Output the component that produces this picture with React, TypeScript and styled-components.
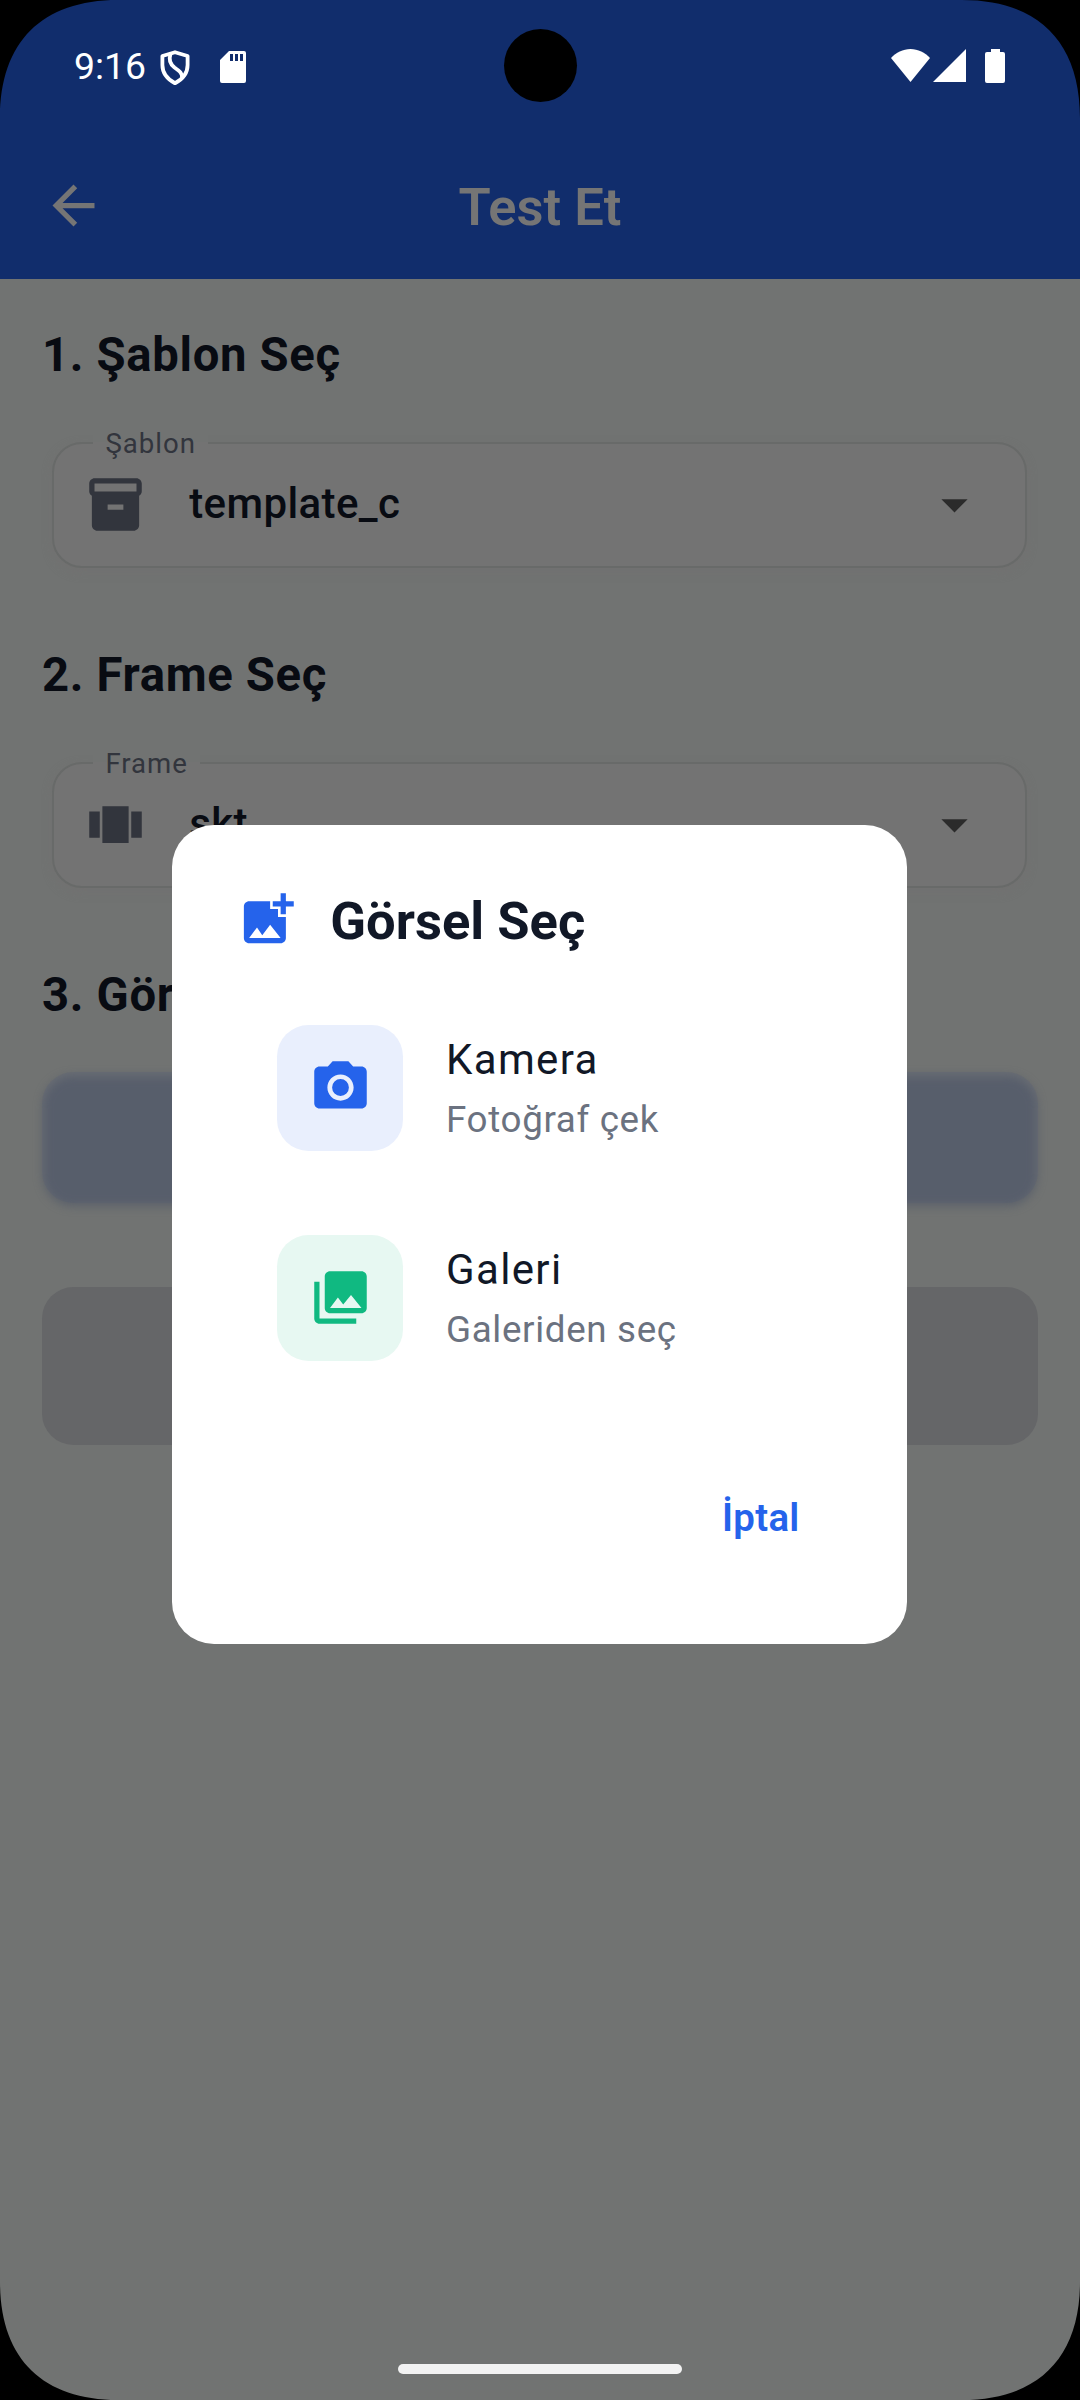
import React from "react";
import styled, { createGlobalStyle } from "styled-components";

const GlobalStyle = createGlobalStyle`
  * { box-sizing: border-box; }
  body { margin: 0; background: #000; font-family: Roboto, "Noto Sans", sans-serif; }
`;

const Screen = styled.div`
  position: relative;
  width: 1080px;
  height: 2400px;
  overflow: hidden;
  display: flex;
  flex-direction: column;
  background: #717372;
`;

const Header = styled.header`
  height: 279px;
  background: #112d6c;
  display: flex;
  flex-direction: column;
`;

const StatusBar = styled.div`
  height: 132px;
  display: flex;
  align-items: flex-start;
  justify-content: space-between;
  padding: 49px 75px 0 74px;
  color: #fff;
`;

const StatusGroup = styled.div`
  display: flex;
  align-items: flex-start;
  svg { display: block; flex: none; }
`;

const Clock = styled.span`
  width: 86px;
  font-size: 37.4px;
  line-height: 34px;
  white-space: nowrap;
`;

const Gap = styled.span<{ $w: number }>`
  width: ${(p) => p.$w}px;
`;

const AppBar = styled.div`
  height: 147px;
  display: grid;
  grid-template-columns: 147px 1fr 147px;
  align-items: center;
  justify-items: center;
  color: #757575;
  svg { display: block; }
`;

const AppTitle = styled.h1`
  margin: 0;
  padding-top: 3px;
  font-size: 52.5px;
  line-height: 62px;
  font-weight: 600;
`;

const Body = styled.main`
  display: flex;
  flex-direction: column;
  padding: 42px 42px 0;
`;

const Section = styled.section`
  display: flex;
  flex-direction: column;
  height: 320px;
`;

const SectionTitle = styled.h2`
  margin: 0;
  font-size: 47.25px;
  line-height: 68px;
  font-weight: 700;
  letter-spacing: 0.66px;
  color: #080b12;
  white-space: nowrap;
`;

const Field = styled.div`
  position: relative;
  margin: 52.5px 11px 0 10.4px;
  padding: 0 39.5px 1px 29.8px;
  height: 126px;
  display: flex;
  align-items: center;
  border: 2.6px solid #686a69;
  border-radius: 30px;
  background: #737373;
  box-shadow: 0 4px 10px rgba(114, 112, 112, 0.8);
  svg { display: block; flex: none; }
`;

const FieldLabel = styled.span`
  position: absolute;
  left: 39px;
  top: -17px;
  padding: 0 12px;
  font-size: 27.6px;
  line-height: 33px;
  letter-spacing: 1px;
  color: #32353d;
  background: linear-gradient(#717372 0 15px, #737373 15px);
`;

const FieldValue = styled.span`
  flex: 1;
  padding-left: 42px;
  font-size: 42px;
  line-height: 50px;
  letter-spacing: 0.39px;
  font-weight: 500;
  color: #080b12;
`;

const SolidButton = styled.div`
  position: relative;
  margin-top: 43px;
  height: 131px;
  border-radius: 31.5px;
  background: rgba(60, 80, 130, 0.13);
  &::before {
    content: "";
    position: absolute;
    inset: 4px 1px -3px 1px;
    border-radius: 30px;
    background: rgba(75, 83, 101, 0.6);
    filter: blur(5px);
  }
`;

const DisabledButton = styled.div`
  margin-top: 84px;
  height: 158px;
  border-radius: 31.5px;
  background: #656668;
`;

const Overlay = styled.div`
  position: absolute;
  inset: 0;
  padding: 132px 1px 63px 0;
  display: flex;
  align-items: center;
  justify-content: center;
`;

const Dialog = styled.div`
  width: 735px;
  height: 819px;
  border-radius: 42px;
  background: #fff;
  padding: 63px 63px 0;
  display: flex;
  flex-direction: column;
`;

const DialogHead = styled.div`
  display: flex;
  align-items: center;
  gap: 31.5px;
  height: 67px;
  padding-left: 0.8px;
  svg { display: block; margin-top: -4px; }
`;

const DialogTitle = styled.h2`
  margin: 0;
  padding-bottom: 2px;
  font-size: 52.5px;
  line-height: 66px;
  font-weight: 700;
  color: #111827;
`;

const Options = styled.div`
  display: flex;
  flex-direction: column;
  gap: 84px;
  padding: 70px 42px 0;
`;

const Option = styled.div`
  display: flex;
  align-items: center;
  gap: 43px;
  height: 126px;
`;

const IconTile = styled.div<{ $bg: string; $fg: string }>`
  width: 126px;
  height: 126px;
  border-radius: 31.5px;
  display: flex;
  align-items: center;
  justify-content: center;
  background: ${(p) => p.$bg};
  color: ${(p) => p.$fg};
  svg { display: block; margin-top: -1px; }
`;

const OptionText = styled.div`
  display: flex;
  flex-direction: column;
  padding-bottom: 2px;
`;

const OptionTitle = styled.span`
  font-size: 42px;
  line-height: 63px;
  letter-spacing: 1.35px;
  color: #111827;
`;

const OptionSub = styled.span`
  margin-top: 2px;
  font-size: 36.75px;
  line-height: 53px;
  letter-spacing: 0.66px;
  color: #6b7280;
`;

const Actions = styled.div`
  display: flex;
  justify-content: flex-end;
  padding: 129.5px 44.5px 0 0;
`;

const Cancel = styled.button`
  border: 0;
  background: none;
  padding: 0;
  font-family: inherit;
  font-size: 38.4px;
  line-height: 54px;
  letter-spacing: 0.26px;
  font-weight: 600;
  color: #2563eb;
`;

const CameraHole = styled.div`
  position: absolute;
  left: 503.5px;
  top: 29px;
  width: 73px;
  height: 73px;
  border-radius: 50%;
  background: #000;
`;

const HomeHandle = styled.div`
  position: absolute;
  left: 398px;
  bottom: 26px;
  width: 284px;
  height: 10px;
  border-radius: 5px;
  background: #f2f2f2;
`;

const Corner = styled.svg<{ $right?: boolean; $bottom?: boolean }>`
  position: absolute;
  ${(p) => (p.$right ? "right: 0;" : "left: 0;")}
  ${(p) => (p.$bottom ? "bottom: 0;" : "top: 0;")}
  transform: scale(${(p) => (p.$right ? -1 : 1)}, ${(p) => (p.$bottom ? -1 : 1)});
`;

const paths = {
  back: "M20 11H7.83l5.59-5.59L12 4l-8 8 8 8 1.41-1.41L7.83 13H20v-2z",
  archive:
    "M20 2H4c-1 0-2 .9-2 2v3.01c0 .72.43 1.34 1 1.69V20c0 1.1 1.1 2 2 2h14c.9 0 2-.9 2-2V8.7c.57-.35 1-.97 1-1.69V4c0-1.1-1-2-2-2zm-5 12H9v-2h6v2zm5-7H4V4h16v3z",
  carousel: "M2 7h4v10H2V7zm5 12h10V5H7v14zM18 7h4v10h-4V7z",
  drop: "M7 10l5 5 5-5z",
  addPhoto:
    "M19 7v2.99s-1.99.01-2 0V7h-3s.01-1.99 0-2h3V2h2v3h3v2h-3zm-3 4V8h-3V5H5c-1.1 0-2 .9-2 2v12c0 1.1.9 2 2 2h12c1.1 0 2-.9 2-2v-8h-3zM5 19l3-4 2 3 3-4 4 5H5z",
  camera:
    "M12 8.8a3.2 3.2 0 1 0 0 6.4 3.2 3.2 0 1 0 0-6.4zM9 2L7.17 4H4c-1.1 0-2 .9-2 2v12c0 1.1.9 2 2 2h16c1.1 0 2-.9 2-2V6c0-1.1-.9-2-2-2h-3.17L15 2H9zm3 15c-2.76 0-5-2.24-5-5s2.24-5 5-5 5 2.24 5 5-2.24 5-5 5z",
  gallery:
    "M22 16V4c0-1.1-.9-2-2-2H8c-1.1 0-2 .9-2 2v12c0 1.1.9 2 2 2h12c1.1 0 2-.9 2-2zm-11-4l2.03 2.71L16 11l4 5H8l3-4zM2 6v14c0 1.1.9 2 2 2h14v-2H4V6H2z",
};

function Icon({ name, color = "currentColor" }: { name: keyof typeof paths; color?: string }) {
  return (
    <svg width="63" height="63" viewBox="0 0 24 24" fill={color}>
      <path d={paths[name]} />
    </svg>
  );
}

function Picker({ label, value, icon }: { label: string; value: string; icon: keyof typeof paths }) {
  return (
    <Field>
      <FieldLabel>{label}</FieldLabel>
      <Icon name={icon} color="#32353d" />
      <FieldValue>{value}</FieldValue>
      <Icon name="drop" color="#2b2b2b" />
    </Field>
  );
}

const corners = [
  [false, false],
  [true, false],
  [false, true],
  [true, true],
];

export default function App() {
  return (
    <>
      <GlobalStyle />
      <Screen>
        <Header>
          <StatusBar>
            <StatusGroup>
              <Clock>9:16</Clock>
              <svg width="30" height="37" viewBox="0 0 30 37" fill="none" stroke="#fff" strokeWidth="3.8">
                <path d="M15 3.200L27.600 7V16c0 8-4.500 14-12.600 18.200C7 30 2.400 24 2.400 16V7z" strokeLinejoin="round" />
                <path d="M10.500 5C8.500 11 10 15 14.500 18.500C20 22.500 22.500 24.500 22 28.500" />
              </svg>
              <Gap $w={30} />
              <svg width="26" height="34" viewBox="0 0 26 34" fill="#fff">
                <path
                  fillRule="evenodd"
                  d="M9 2H24a2 2 0 0 1 2 2V32a2 2 0 0 1-2 2H2a2 2 0 0 1-2-2V11zM10 5v7h3V5zM15 5v7h3V5zM20 5v7h3V5z"
                />
              </svg>
            </StatusGroup>
            <StatusGroup>
              <svg width="39" height="33" viewBox="0 0 39 33" fill="#fff">
                <path d="M19.500 33L0 9C5 3.500 12 0 19.500 0S34 3.500 39 9z" />
              </svg>
              <Gap $w={3.5} />
              <svg width="33" height="33" viewBox="0 0 33 33" fill="#fff">
                <path d="M33 0V33H0z" />
              </svg>
              <Gap $w={19} />
              <svg width="20" height="34" viewBox="0 0 20 34" fill="#fff">
                <path d="M6 0h9v3h3a2 2 0 0 1 2 2V32a2 2 0 0 1-2 2H2a2 2 0 0 1-2-2V5a2 2 0 0 1 2-2h4z" />
              </svg>
            </StatusGroup>
          </StatusBar>
          <AppBar>
            <Icon name="back" />
            <AppTitle>Test Et</AppTitle>
          </AppBar>
        </Header>
        <Body>
          <Section>
            <SectionTitle>1. Şablon Seç</SectionTitle>
            <Picker label="Şablon" value="template_c" icon="archive" />
          </Section>
          <Section>
            <SectionTitle>2. Frame Seç</SectionTitle>
            <Picker label="Frame" value="skt" icon="carousel" />
          </Section>
          <SectionTitle>3. Görsel Seç</SectionTitle>
          <SolidButton />
          <DisabledButton />
        </Body>
        <Overlay>
          <Dialog>
            <DialogHead>
              <Icon name="addPhoto" color="#2563eb" />
              <DialogTitle>Görsel Seç</DialogTitle>
            </DialogHead>
            <Options>
              <Option>
                <IconTile $bg="#e9effd" $fg="#2563eb">
                  <Icon name="camera" />
                </IconTile>
                <OptionText>
                  <OptionTitle>Kamera</OptionTitle>
                  <OptionSub>Fotoğraf çek</OptionSub>
                </OptionText>
              </Option>
              <Option>
                <IconTile $bg="#e7f8f2" $fg="#10b981">
                  <Icon name="gallery" />
                </IconTile>
                <OptionText>
                  <OptionTitle>Galeri</OptionTitle>
                  <OptionSub>Galeriden seç</OptionSub>
                </OptionText>
              </Option>
            </Options>
            <Actions>
              <Cancel>İptal</Cancel>
            </Actions>
          </Dialog>
        </Overlay>
        <CameraHole />
        <HomeHandle />
        {corners.map(([right, bottom], i) => (
          <Corner key={i} $right={right} $bottom={bottom} width="118" height="118" viewBox="0 0 118 118">
            <path d="M0 0H118C42 0 0 42 0 118z" />
          </Corner>
        ))}
      </Screen>
    </>
  );
}
